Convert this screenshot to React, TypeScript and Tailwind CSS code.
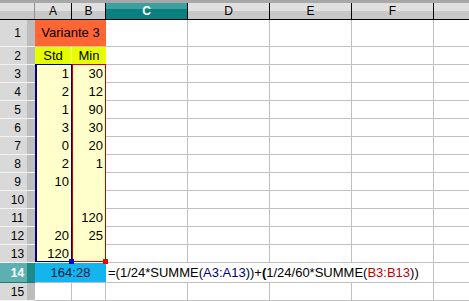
import React from "react";

const FONT = { fontFamily: '"Liberation Sans", Arial, sans-serif' };

const WIDE = ["C", "D", "E", "F", "G"];

const DATEN: [string, string][] = [
  ["1", "30"],
  ["2", "12"],
  ["1", "90"],
  ["3", "30"],
  ["0", "20"],
  ["2", "1"],
  ["10", ""],
  ["", ""],
  ["", "120"],
  ["20", "25"],
  ["120", ""],
];

function RowHead({ n, aktiv = false }: { n: number; aktiv?: boolean }) {
  return (
    <div
      className={
        aktiv
          ? "w-[35px] shrink-0 h-full flex items-center justify-center text-[12px] font-bold text-white bg-[linear-gradient(to_right,#5eb0b0_78%,#1f8a8a_78%)] border-b border-[#1f7a7a]"
          : "w-[35px] shrink-0 h-full flex items-center justify-center text-[12px] text-black bg-[linear-gradient(to_right,#d9d9d9_78%,#bdbdbd_78%)] border-b border-[#f2f2f2]"
      }
    >
      {n}
    </div>
  );
}

function LeereZellen() {
  return (
    <>
      {WIDE.map((c) => (
        <div key={c} className="w-[82px] shrink-0 h-full border-r border-b border-[#c0c0c0]" />
      ))}
    </>
  );
}

export default function App() {
  return (
    <main className="w-[469px] h-[301px] overflow-hidden bg-white relative" style={FONT}>
      {/* obere Kante */}
      <div className="h-[3px] bg-[#a8a8a8]" />

      {/* Spaltenkoepfe */}
      <div className="flex h-[17px] border-b border-black text-[12px]">
        <div className="w-[35px] shrink-0 bg-[linear-gradient(#e0e0e0_50%,#c8c8c8_50%)] border-r border-[#909090]" />
        <div className="w-[37px] shrink-0 flex items-center justify-center bg-[linear-gradient(#e0e0e0_50%,#c8c8c8_50%)] border-r border-black">
          A
        </div>
        <div className="w-[34px] shrink-0 flex items-center justify-center bg-[linear-gradient(#e0e0e0_50%,#c8c8c8_50%)] border-r border-black">
          B
        </div>
        <div className="w-[82px] shrink-0 flex items-center justify-center font-bold text-white bg-[linear-gradient(#3aa0a0_40%,#0c8080_40%)] border-r border-black">
          C
        </div>
        {["D", "E", "F", "G"].map((c) => (
          <div
            key={c}
            className="w-[82px] shrink-0 flex items-center justify-center bg-[linear-gradient(#e0e0e0_50%,#c8c8c8_50%)] border-r border-black"
          >
            {c === "G" ? "" : c}
          </div>
        ))}
      </div>

      {/* Zeile 1 */}
      <div className="flex h-[27px] text-[13px]">
        <RowHead n={1} />
        <div className="w-[71px] shrink-0 h-full flex items-center justify-center bg-[#ff6633] border-b border-[#c0c0c0]">
          Variante 3
        </div>
        <LeereZellen />
      </div>

      {/* Zeile 2 */}
      <div className="flex h-[18px] text-[13px]">
        <RowHead n={2} />
        <div className="w-[37px] shrink-0 h-full flex items-center justify-center bg-[#e6ff00] border-r border-[#f4ff99]">
          Std
        </div>
        <div className="w-[34px] shrink-0 h-full flex items-center justify-center bg-[#e6ff00]">
          Min
        </div>
        <LeereZellen />
      </div>

      {/* Zeilen 3 - 13 */}
      {DATEN.map(([std, min], i) => (
        <div key={i} className="flex h-[18px] text-[13px]">
          <RowHead n={i + 3} />
          <div className="w-[37px] shrink-0 h-full flex items-center justify-end pr-[3px] bg-[#ffffcc]">
            {std}
          </div>
          <div className="w-[34px] shrink-0 h-full flex items-center justify-end pr-[3px] bg-[#ffffcc]">
            {min}
          </div>
          <LeereZellen />
        </div>
      ))}

      {/* Zeile 14 */}
      <div className="flex h-[20px] text-[13px]">
        <RowHead n={14} aktiv />
        <div className="w-[71px] shrink-0 h-full flex items-center justify-center bg-[#14b4ee] border-b border-[#c0c0c0] text-[#102040]">
          164:28
        </div>
        <div className="w-[82px] shrink-0 h-full relative border-b border-[#c0c0c0]">
          <div className="absolute left-[2px] top-0 h-full flex items-center whitespace-nowrap z-10 bg-white pr-[2px]">
            =(1/24*SUMME(<span className="text-[#000080]">A3:A13</span>))+<span className="font-bold">(</span>1/24/60*SUMME(
            <span className="text-[#c00000]">B3:B13</span>))
          </div>
        </div>
        {["D", "E", "F", "G"].map((c) => (
          <div key={c} className="w-[82px] shrink-0 h-full border-r border-b border-[#c0c0c0]" />
        ))}
      </div>

      {/* Zeile 15 */}
      <div className="flex h-[18px] text-[13px]">
        <RowHead n={15} />
        <div className="w-[37px] shrink-0 h-full border-r border-b border-[#c0c0c0]" />
        <div className="w-[34px] shrink-0 h-full border-r border-b border-[#c0c0c0]" />
        <LeereZellen />
      </div>

      {/* Bereichsmarkierungen */}
      <div className="absolute left-[35px] top-[64px] w-[37px] h-[198px] border border-l-2 border-[#000080] pointer-events-none" />
      <div className="absolute left-[72px] top-[64px] w-[34px] h-[198px] border border-[#cc0000] pointer-events-none" />
      <div className="absolute left-[69px] top-[259px] w-[5px] h-[5px] bg-[#0000cc]" />
      <div className="absolute left-[103px] top-[259px] w-[5px] h-[5px] bg-[#ee0000]" />
    </main>
  );
}
